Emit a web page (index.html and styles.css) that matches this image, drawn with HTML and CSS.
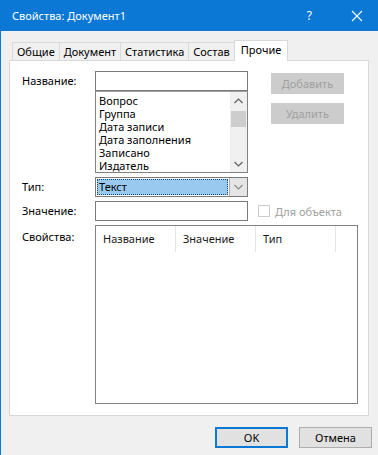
FILE: index.html
```html
<!DOCTYPE html>
<html lang="ru">
<head>
    <meta charset="UTF-8">
    <meta name="viewport" content="width=device-width, initial-scale=1.0">
    <title>Свойства: Документ1</title>
    <link rel="stylesheet" href="styles.css">
</head>
<body>
    <div class="window">
        <div class="titlebar">
            <span class="title">Свойства: Документ1</span>
            <span class="help">?</span>
            <svg class="close" width="12" height="12" viewBox="0 0 12 12">
                <path d="M1 1 L11 11 M11 1 L1 11" stroke="#ffffff" stroke-width="1.1" fill="none"/>
            </svg>
        </div>

        <div class="tabs">
            <div class="tab">Общие</div>
            <div class="tab">Документ</div>
            <div class="tab">Статистика</div>
            <div class="tab">Состав</div>
            <div class="tab active">Прочие</div>
        </div>

        <div class="panel">
            <div class="form">
                <label class="label">Название:</label>
                <div class="name-block">
                    <div class="input"></div>
                    <div class="listbox">
                        <ul class="items">
                            <li>Вопрос</li>
                            <li>Группа</li>
                            <li>Дата записи</li>
                            <li>Дата заполнения</li>
                            <li>Записано</li>
                            <li>Издатель</li>
                        </ul>
                        <div class="scrollbar">
                            <div class="arrow">
                                <svg width="9" height="6" viewBox="0 0 9 6"><path d="M0.5 5 L4.5 1 L8.5 5" stroke="#606060" stroke-width="1.2" fill="none"/></svg>
                            </div>
                            <div class="track"><div class="thumb"></div></div>
                            <div class="arrow">
                                <svg width="9" height="6" viewBox="0 0 9 6"><path d="M0.5 1 L4.5 5 L8.5 1" stroke="#606060" stroke-width="1.2" fill="none"/></svg>
                            </div>
                        </div>
                    </div>
                </div>
                <div class="side-buttons">
                    <button class="button disabled">Добавить</button>
                    <button class="button disabled">Удалить</button>
                </div>

                <label class="label">Тип:</label>
                <div class="combo">
                    <div class="combo-value">Текст</div>
                    <div class="combo-button">
                        <svg width="9" height="6" viewBox="0 0 9 6"><path d="M0.5 1 L4.5 5 L8.5 1" stroke="#8a8a8a" stroke-width="1.1" fill="none"/></svg>
                    </div>
                </div>
                <div></div>

                <label class="label">Значение:</label>
                <div class="input"></div>
                <div class="check">
                    <span class="checkbox"></span>
                    <span class="check-label">Для объекта</span>
                </div>

                <label class="label label-top">Свойства:</label>
                <div class="listview">
                    <div class="lv-header">
                        <div class="lv-col">Название</div>
                        <div class="lv-col">Значение</div>
                        <div class="lv-col">Тип</div>
                        <div class="lv-col lv-rest"></div>
                    </div>
                </div>
            </div>
        </div>

        <div class="footer">
            <button class="button default">OK</button>
            <button class="button">Отмена</button>
        </div>
    </div>
</body>
</html>
```

FILE: styles.css
```css
:root {
    --accent: #0a78d4;
    --window-bg: #f0f0f0;
    --tab-border: #d9d9d9;
    --field-border: #7a7a7a;
    --text: #000000;
    --disabled-text: #a0a0a0;
}

* {
    margin: 0;
    padding: 0;
    box-sizing: border-box;
}

body {
    width: 378px;
    height: 455px;
    overflow: hidden;
    background-color: var(--window-bg);
    font-family: "Noto Sans", "Open Sans", sans-serif;
    font-size: 11px;
    color: var(--text);
}

.window {
    height: 455px;
    border-left: 1px solid var(--accent);
    background-color: var(--window-bg);
}

/* Title bar */
.titlebar {
    height: 31px;
    background-color: var(--accent);
    color: #ffffff;
    display: flex;
    align-items: center;
    padding-left: 11px;
}

.title {
    flex: 1;
    font-size: 11px;
}

.help {
    font-size: 12px;
    margin-right: 39px;
}

.close {
    margin-right: 15px;
}

/* Tabs */
.tabs {
    display: flex;
    align-items: flex-end;
    height: 29px;
    margin-left: 11px;
    padding-top: 8px;
}

.tab {
    height: 18px;
    padding: 0 4px;
    border: 1px solid var(--tab-border);
    border-bottom: none;
    border-right: none;
    background-color: var(--window-bg);
    line-height: 17px;
    white-space: nowrap;
}

.tab.active {
    height: 21px;
    padding: 0 6px;
    background-color: #ffffff;
    border-right: 1px solid var(--tab-border);
    line-height: 17px;
    position: relative;
    bottom: -1px;
}

/* Panel */
.panel {
    margin-left: 8px;
    width: 360px;
    height: 356px;
    border: 1px solid var(--tab-border);
    background-color: #ffffff;
    padding: 10px 0 0 12px;
}

.form {
    display: grid;
    grid-template-columns: 73px 153px 110px;
    row-gap: 4px;
}

.label {
    line-height: 20px;
}

.label-top {
    padding-top: 2px;
}

.input {
    height: 20px;
    border: 1px solid var(--field-border);
    background-color: #ffffff;
}

.name-block {
    display: flex;
    flex-direction: column;
}

.listbox {
    height: 82px;
    border: 1px solid #828282;
    border-top-color: #a0a0a0;
    display: flex;
}

.items {
    list-style: none;
    flex: 1;
    padding: 2px 0 0 3px;
    line-height: 13px;
    overflow: hidden;
}

.scrollbar {
    width: 17px;
    background-color: #f0f0f0;
    display: flex;
    flex-direction: column;
}

.arrow {
    height: 17px;
    display: flex;
    align-items: center;
    justify-content: center;
}

.track {
    flex: 1;
    padding-top: 2px;
}

.thumb {
    margin: 0 1px;
    height: 16px;
    background-color: #cdcdcd;
}

/* Side buttons */
.side-buttons {
    display: flex;
    flex-direction: column;
    gap: 9px;
    padding: 2px 0 0 23px;
}

.button {
    width: 73px;
    height: 21px;
    border: 1px solid #adadad;
    background-color: #e1e1e1;
    font-family: inherit;
    font-size: 11px;
    color: var(--text);
}

.button.disabled {
    background-color: #cccccc;
    border-color: #cccccc;
    color: var(--disabled-text);
}

.button.default {
    border: 1px solid var(--accent);
    box-shadow: inset 0 0 0 1px var(--accent);
}

/* Combo box */
.combo {
    height: 20px;
    border: 1px solid var(--field-border);
    display: flex;
    background-color: #ffffff;
}

.combo-value {
    flex: 1;
    margin: 1px;
    padding-left: 1px;
    background-color: #99c9ef;
    border: 1px dotted #0d4a7a;
    line-height: 14px;
}

.combo-button {
    width: 18px;
    border-left: 1px solid #adadad;
    background-color: #e5e5e5;
    display: flex;
    align-items: center;
    justify-content: center;
}

/* Checkbox */
.check {
    display: flex;
    align-items: center;
    padding-left: 10px;
    gap: 5px;
}

.checkbox {
    width: 12px;
    height: 12px;
    border: 1px solid #cccccc;
    background-color: #ffffff;
}

.check-label {
    color: var(--disabled-text);
}

/* List view */
.listview {
    grid-column: 2 / span 2;
    height: 179px;
    border: 1px solid #828282;
    background-color: #ffffff;
}

.lv-header {
    display: flex;
    height: 26px;
}

.lv-col {
    width: 80px;
    padding-left: 7px;
    line-height: 26px;
    border-right: 1px solid #e5e5e5;
    color: #1a1a1a;
}

.lv-col.lv-rest {
    flex: 1;
    border-right: none;
}

/* Footer */
.footer {
    display: flex;
    justify-content: flex-end;
    gap: 11px;
    padding: 11px 6px 0 0;
}
```
